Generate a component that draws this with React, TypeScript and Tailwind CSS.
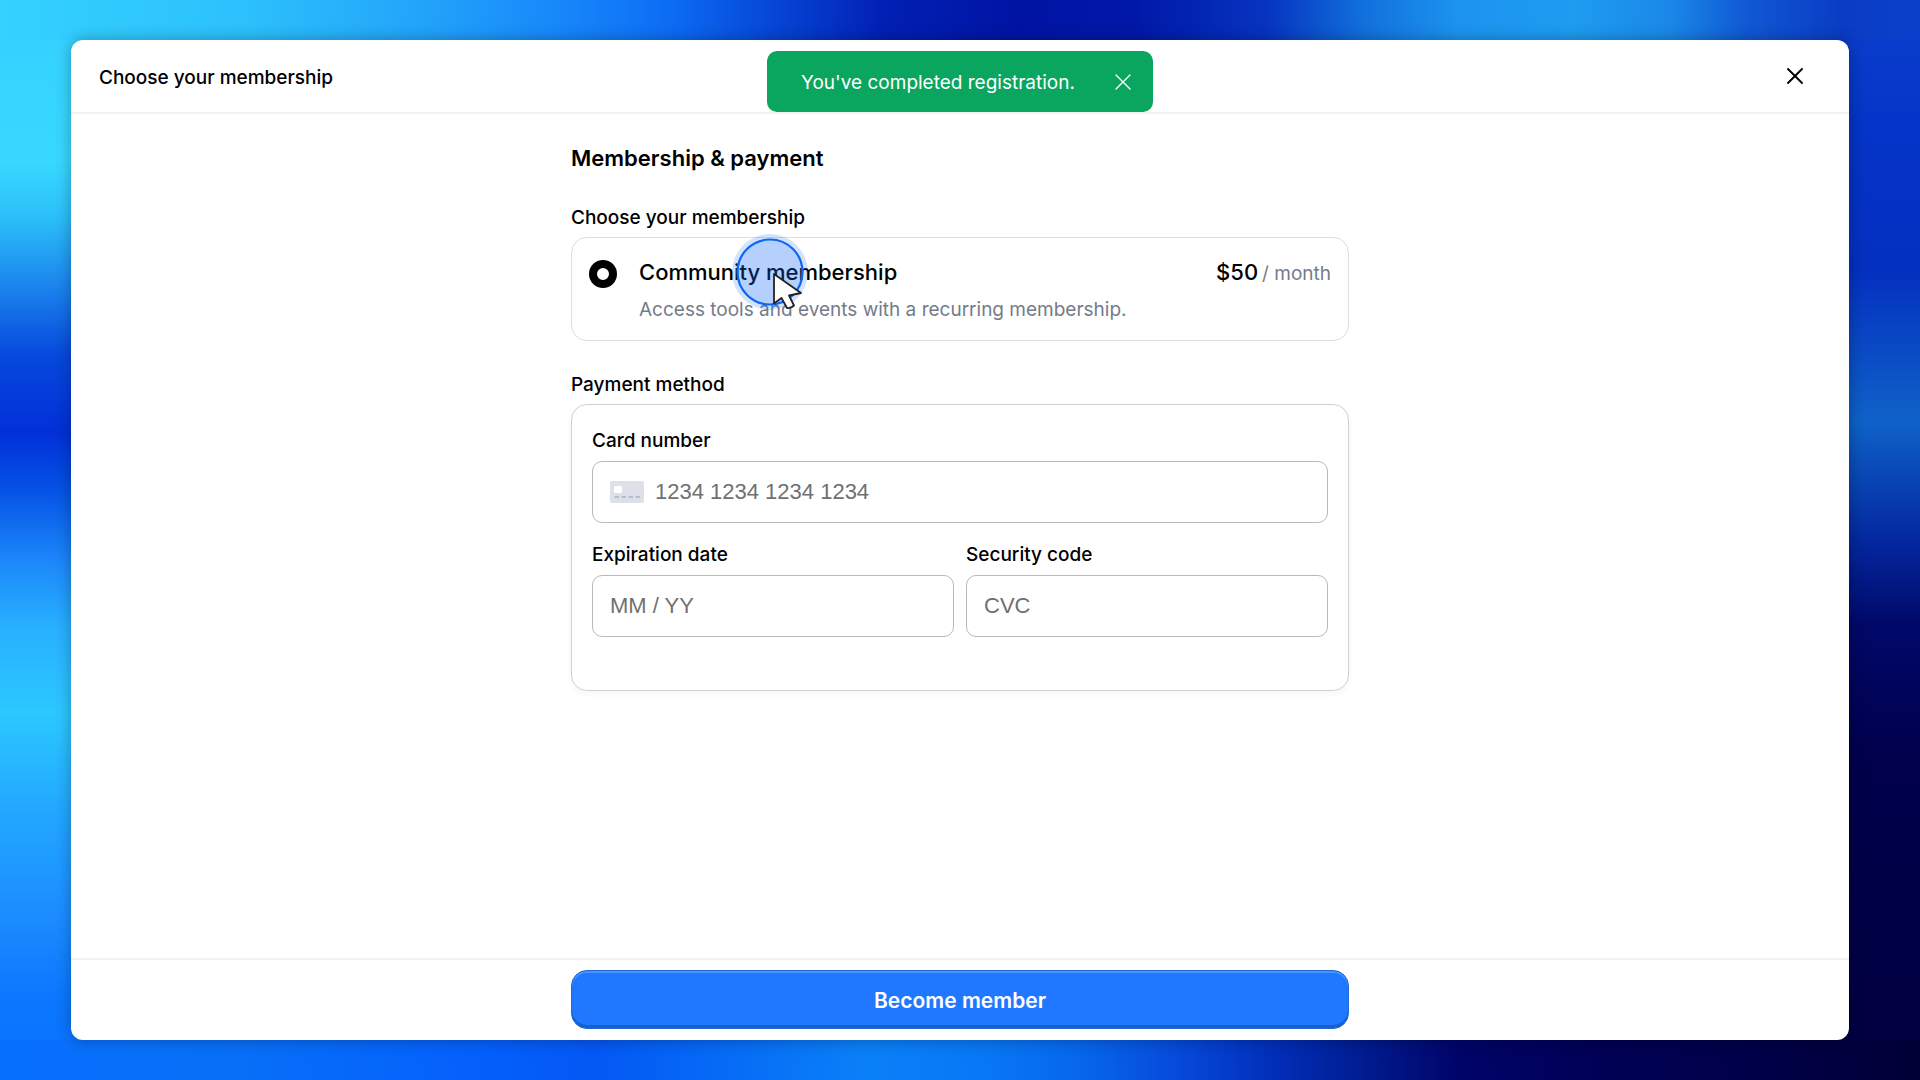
import { X } from 'lucide-react'

const labelClass = 'block text-[19px] leading-8 font-medium'
const fieldClass =
  'mt-1 block h-[62px] w-full rounded-[10px] border border-[#b8b8b8] bg-white pr-4 font-[Liberation_Sans,sans-serif] text-[22px] text-black placeholder:text-[#707070] outline-none'

function CardIcon() {
  return (
    <svg className="pointer-events-none absolute left-[18px] top-5 h-[22px] w-[34px]" viewBox="0 0 34 22" aria-hidden="true">
      <rect width="34" height="22" rx="2" fill="#dde0e9" />
      <rect x="4" y="5" width="8" height="7" rx="1.5" fill="#fff" />
      <path d="M4.5 16H9M11.5 16H16M18.5 16H23M25.5 16H30" stroke="#b8bdce" strokeWidth="2" />
    </svg>
  )
}

function ClickCursor() {
  return (
    <svg
      className="pointer-events-none absolute left-[158px] -top-1.5 h-20 w-20"
      viewBox="0 0 80 80"
      aria-hidden="true"
    >
      <circle cx="40" cy="40" r="38" fill="#0b66f5" fillOpacity="0.18" />
      <circle cx="40" cy="40" r="32.5" fill="#0b66f5" fillOpacity="0.15" stroke="#0b66f5" strokeWidth="2.2" />
      <path
        d="M44 42V71.5L51.5 66L57 76Q61 76.500 64 73.500L59 63.5L71 61Z"
        fill="#fff"
        stroke="#222"
        strokeWidth="1.8"
        strokeLinejoin="round"
      />
    </svg>
  )
}

export default function App() {
  return (
    <div className="flex min-h-screen flex-col bg-[linear-gradient(to_right,#34d2ff,#2cc0fc_13%,#22a4fa_22%,#1684fa_30%,#0c6cf4_35%,#0648d8_40%,#0220b4_46%,#0014a4_53%,#0018a8_59%,#0634c0_66%,#1270dc_71%,#1c94f0_76%,#1e9cf0_82%,#1a88e8_87%,#1058d4_91%,#0a3cc4_96%,#0c40cc),linear-gradient(to_right,#0870ff,#0870f8_12%,#0460fc_25%,#0458f4_31%,#066cf6_38%,#0a80f8_45%,#0878f6_51%,#0668ec_56%,#064cdc_61%,#0230bc_66%,#001c90_71%,#000468_76%,#000054_84%,#000048_92%,#000036),linear-gradient(#34d0ff,#38d8ff_15%,#2cc0fa_20%,#1a80ec_27%,#0648dc_33%,#0230d8_40%,#0450e4_45%,#1c88fa_52%,#28b0ff_58%,#2cc8ff_66%,#22a8ff_75%,#1c8cff_85%,#0c78ff_92%,#0870ff),linear-gradient(#0c40cc,#0434c8_12%,#0430c0_25%,#0e62c8_39%,#0428a0_50%,#000868_58%,#00004c_70%,#000040)] bg-[size:100%_40px,100%_40px,90px_100%,90px_100%] bg-[position:top,bottom,left,right] bg-no-repeat px-[71px] py-10 font-[Inter,sans-serif] text-black">
      <main className="relative flex flex-1 flex-col rounded-xl bg-white shadow-[0_0_16px_rgba(0,0,0,0.3)]">
        <header className="flex h-[74px] items-center justify-between border-b-2 border-[#f1f1f1] px-7">
          <h1 className="pt-1 text-[19px] font-medium">Choose your membership</h1>
          <button type="button" aria-label="Close" className="mr-3">
            <X className="size-7" strokeWidth={1.6} />
          </button>
        </header>

        {/* Toast */}
        <div
          role="status"
          className="absolute left-1/2 top-[11px] flex h-[61px] w-[386px] -translate-x-1/2 items-center justify-between rounded-[10px] bg-[#0aa55f] pl-[34px] pr-4 text-[19px] text-white"
        >
          <span className="pt-1">You've completed registration.</span>
          <button type="button" aria-label="Dismiss">
            <X className="size-7" strokeWidth={1.2} />
          </button>
        </div>

        <form id="membership" className="mx-auto w-full max-w-[778px] flex-1 pt-7">
          <h2 className="text-[22px] leading-8 font-semibold">Membership & payment</h2>

          <fieldset className="mt-7">
            <legend className={labelClass}>Choose your membership</legend>
            <label className="relative mt-[3px] flex h-[104px] gap-[22px] rounded-2xl border border-[#dedede] px-[17px] pt-4">
              <input
                type="radio"
                name="plan"
                defaultChecked
                className="mt-[6px] size-7 shrink-0 appearance-none rounded-full border-8 border-black bg-white"
              />
              <span className="flex-1">
                <span className="block text-[22px] leading-9 font-medium">Community membership</span>
                <span className="mt-0.5 block text-[19px] leading-9 text-[#747b8a]">
                  Access tools and events with a recurring membership.
                </span>
              </span>
              <span className="flex items-baseline gap-1 self-start text-[19px] leading-9 text-[#747b8a]">
                <span className="text-[22px] font-medium text-black">$50</span>
                <span>/ month</span>
              </span>
              <ClickCursor />
            </label>
          </fieldset>

          <section className="mt-7">
            <h3 className={labelClass}>Payment method</h3>
            <div className="mt-[3px] h-[287px] rounded-2xl border border-[#d0d0d0] px-5 pt-5 shadow-[0_3px_6px_rgba(0,0,0,0.04)]">
              <label htmlFor="card" className={labelClass}>
                Card number
              </label>
              <div className="relative">
                <input id="card" className={fieldClass + ' pl-[62px]'} placeholder="1234 1234 1234 1234" />
                <CardIcon />
              </div>
              <div className="mt-4 grid grid-cols-2 gap-3">
                <div>
                  <label htmlFor="expiry" className={labelClass}>
                    Expiration date
                  </label>
                  <input id="expiry" className={fieldClass + ' pl-[17px]'} placeholder="MM / YY" />
                </div>
                <div>
                  <label htmlFor="cvc" className={labelClass}>
                    Security code
                  </label>
                  <input id="cvc" className={fieldClass + ' pl-[17px]'} placeholder="CVC" />
                </div>
              </div>
            </div>
          </section>
        </form>

        <footer className="border-t-2 border-[#f1f1f1] pt-[10px] pb-[11px]">
          <button
            type="submit"
            form="membership"
            className="mx-auto block h-[59px] w-full max-w-[778px] rounded-2xl border border-[#2168d8] bg-[#1f78ff] pt-0.5 text-[21px] font-semibold text-white shadow-[inset_0_2px_0_#4a93ff,inset_0_-3px_0_#185fcb]"
          >
            Become member
          </button>
        </footer>
      </main>
    </div>
  )
}
